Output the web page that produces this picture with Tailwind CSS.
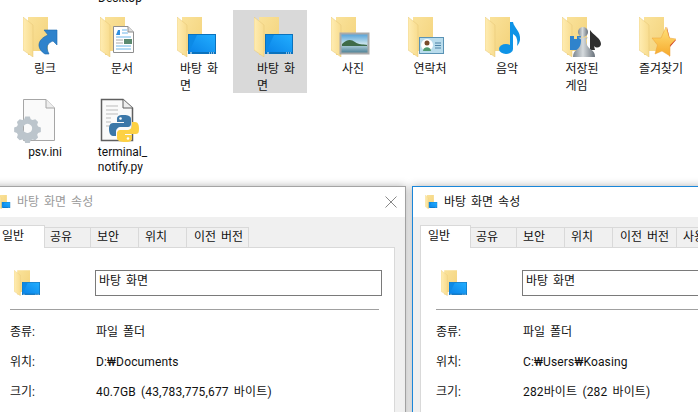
<!DOCTYPE html>
<html lang="ko">
<head>
<meta charset="UTF-8">
<title>바탕 화면 속성</title>
<script src="https://cdn.jsdelivr.net/npm/@tailwindcss/browser@4"></script>
</head>
<body class="bg-white overflow-hidden">
<svg class="absolute w-0 h-0">
  <defs>
    <linearGradient id="fb" x1="0" y1="0" x2="1" y2="1"><stop offset="0" stop-color="#fae29a"/><stop offset="1" stop-color="#f3d27a"/></linearGradient>
    <linearGradient id="ff" x1="0" y1="0" x2="1" y2="0"><stop offset="0" stop-color="#ffedb3"/><stop offset="1" stop-color="#f8dc8e"/></linearGradient>
    <linearGradient id="sc" x1="0" y1="1" x2="1" y2="0"><stop offset="0" stop-color="#0a84e8"/><stop offset="1" stop-color="#22aeff"/></linearGradient>
    <linearGradient id="pw" x1="0" y1="0" x2="1" y2="0"><stop offset="0" stop-color="#7d8790"/><stop offset=".45" stop-color="#d5dadd"/><stop offset="1" stop-color="#67707a"/></linearGradient>
    <linearGradient id="st" x1="0" y1="0" x2="0" y2="1"><stop offset="0" stop-color="#ffe27a"/><stop offset="1" stop-color="#f6a92c"/></linearGradient>
    <linearGradient id="sky" x1="0" y1="0" x2="0" y2="1"><stop offset="0" stop-color="#4d9ed8"/><stop offset=".5" stop-color="#c4e0ea"/><stop offset="1" stop-color="#44798f"/></linearGradient>
    <symbol id="folder" viewBox="0 0 25 40">
      <path d="M5 0H25V34H10V38H5Z" fill="url(#fb)"/>
      <path d="M0 0L10 8V40L0 33Z" fill="url(#ff)"/>
      <path d="M0 0L10 8V40L0 33Z" fill="none" stroke="#e6c777" stroke-width=".5"/>
    </symbol>
    <symbol id="screen" viewBox="0 0 28 20">
      <rect width="28" height="20" fill="#0b72bd"/>
      <rect x="1" y="1" width="26" height="17" fill="url(#sc)"/>
      <path d="M1 18L9 1H1Z" fill="#0c8ae6"/>
      <path d="M2 19h2M21 19h1M23 19h1M25 19h1" stroke="#fff" stroke-width="1"/>
    </symbol>
  </defs>
</svg>

<div class="h-[412px] w-[698px] overflow-hidden font-['Roboto','Noto_Sans_CJK_KR',sans-serif] text-[12px] text-[#111] [word-spacing:2px]">
  <div class="h-[174px]">
    <div class="h-[3px] pl-[98px] overflow-visible leading-[15px] -translate-y-[9px]">Desktop</div>
    <div class="grid grid-cols-[repeat(9,74px)] gap-x-[3px] gap-y-[2px] pl-[2px] pt-[7px]">

      <div class="h-[83px] pt-[3px] flex flex-col items-center">
        <svg class="w-[48px] h-[46px] overflow-visible" viewBox="0 0 48 46"><use href="#folder" x="8" y="4" width="25" height="40"/>
          <path d="M30 41C22 36 21 27 33 22L29 17H42V32L38 28C33 30 30 33 34 41Z" fill="#2f83cc" stroke="#1c69ae" stroke-width=".6"/></svg>
        <div class="mt-[2px] ml-[12px] leading-[17px]">링크</div>
      </div>

      <div class="h-[83px] pt-[3px] flex flex-col items-center">
        <svg class="w-[48px] h-[46px] overflow-visible" viewBox="0 0 48 46"><use href="#folder" x="8" y="4" width="25" height="40"/>
          <path d="M21.5 13.5H36L41.5 19V39.5H21.5Z" fill="#fff" stroke="#8f8f8f"/><path d="M36 13.500V19H41.500" fill="#ddd" stroke="#8f8f8f"/>
          <path d="M24 22l2-5h2v5z" fill="#2f8fe0"/><path d="M30 17h5M30 20h6M24 24h15M24 33h15M24 36h15" stroke="#6db6e8"/>
          <rect x="32" y="26" width="8" height="5" fill="#5b8a70"/><path d="M24 27h7M24 30h7" stroke="#aaa"/></svg>
        <div class="mt-[2px] ml-[12px] leading-[17px]">문서</div>
      </div>

      <div class="h-[83px] pt-[3px] flex flex-col items-center">
        <svg class="w-[48px] h-[46px] overflow-visible" viewBox="0 0 48 46"><use href="#folder" x="8" y="4" width="25" height="40"/><use href="#screen" x="19" y="21" width="28" height="20"/></svg>
        <div class="mt-[2px] ml-[12px] leading-[17px]">바탕 화<br>면</div>
      </div>

      <div class="h-[83px] pt-[3px] flex flex-col items-center bg-[#d9d9d9]">
        <svg class="w-[48px] h-[46px] overflow-visible" viewBox="0 0 48 46"><use href="#folder" x="8" y="4" width="25" height="40"/><use href="#screen" x="19" y="21" width="28" height="20"/></svg>
        <div class="mt-[2px] ml-[12px] leading-[17px]">바탕 화<br>면</div>
      </div>

      <div class="h-[83px] pt-[3px] flex flex-col items-center">
        <svg class="w-[48px] h-[46px] overflow-visible" viewBox="0 0 48 46"><use href="#folder" x="8" y="4" width="25" height="40"/>
          <rect x="17.500" y="20.500" width="28" height="20" fill="url(#sky)" stroke="#a9a9a9" stroke-width="2"/>
          <path d="M19 31c5-5 9-5 13-2s7 2 12 3v1H19Z" fill="#3f6b48"/></svg>
        <div class="mt-[2px] ml-[12px] leading-[17px]">사진</div>
      </div>

      <div class="h-[83px] pt-[3px] flex flex-col items-center">
        <svg class="w-[48px] h-[46px] overflow-visible" viewBox="0 0 48 46"><use href="#folder" x="8" y="4" width="25" height="40"/>
          <rect x="19.500" y="24.500" width="24" height="16" fill="#b9dcec" stroke="#5a93b5"/>
          <circle cx="27" cy="32" r="6" fill="#fff"/><circle cx="27" cy="30" r="2.500" fill="#7a4c2c"/><path d="M23 38c0-5 8-5 8 0Z" fill="#4f9a70"/>
          <path d="M35 30h6M35 32.500h6M35 35h6" stroke="#4f84a6"/></svg>
        <div class="mt-[2px] ml-[12px] leading-[17px]">연락처</div>
      </div>

      <div class="h-[83px] pt-[3px] flex flex-col items-center">
        <svg class="w-[48px] h-[46px] overflow-visible" viewBox="0 0 48 46"><use href="#folder" x="8" y="4" width="25" height="40"/>
          <ellipse cx="29" cy="36" rx="7" ry="5" fill="#0f93e6"/><path d="M33 9h3c1 6 8 9 7 18-.5 3-2 5-3 6 1-5 0-10-4-12V36h-3Z" fill="#0f93e6"/></svg>
        <div class="mt-[2px] ml-[12px] leading-[17px]">음악</div>
      </div>

      <div class="h-[83px] pt-[3px] flex flex-col items-center">
        <svg class="w-[48px] h-[46px] overflow-visible" viewBox="0 0 48 46"><use href="#folder" x="8" y="4" width="25" height="40"/>
          <path d="M16 23h4v3h3v-3h4v14H16Z" fill="#2f83cc"/>
          <path d="M36 17c3 5 11 8 11 14 0 3-4 5-7 2l1 4h-5Z" fill="#2e2e2e"/>
          <circle cx="29" cy="19" r="5" fill="url(#pw)"/><path d="M24 24.500h10l-2 2c0 5 2 8 5 10 3 2 4 4 4 7.500H19c0-3.500 1-5.500 4-7.500 3-2 4-5 4-10Z" fill="url(#pw)"/></svg>
        <div class="mt-[2px] ml-[8px] leading-[17px]">저장된<br>게임</div>
      </div>

      <div class="h-[83px] pt-[3px] flex flex-col items-center">
        <svg class="w-[48px] h-[46px] overflow-visible" viewBox="0 0 48 46"><use href="#folder" x="8" y="4" width="25" height="40"/>
          <path d="M36 14L39 27 45 27 39 34 39 44 37 39Z" fill="#d1492a"/>
          <path d="M35 14L38.500 25 45 26 39 32 39 43 31 38 24 41 26.500 32 21 25 30 25Z" fill="url(#st)" stroke="#eda23a" stroke-width=".5"/></svg>
        <div class="mt-[2px] ml-[12px] leading-[17px] whitespace-nowrap">즐겨찾기</div>
      </div>

      <div class="h-[77px] pt-[3px] flex flex-col items-center">
        <svg class="w-[48px] h-[46px] overflow-visible" viewBox="0 0 48 46">
          <path d="M8.500 1.500H31L39.500 10V42.500H8.500Z" fill="#fafafa" stroke="#a6a6a6"/><path d="M31 1.500V10H39.500" fill="#eee" stroke="#a6a6a6"/>
          <path fill-rule="evenodd" d="M10 20h5l1 3 2 1 3-1 3 3-1 3 1 2 3 1v5l-3 1-1 2 1 3-3 3-3-1-2 1-1 3h-5l-1-3-2-1-3 1-3-3 1-3-1-2-3-1v-5l3-1 1-2-1-3 3-3 3 1 2-1ZM12.500 28a5 5 0 1 0 .01 0Z" fill="#bcc5cc" transform="translate(1 0) scale(.92)"/></svg>
        <div class="mt-[1px] ml-[12px] leading-[15px]">psv.ini</div>
      </div>

      <div class="h-[77px] pt-[3px] flex flex-col items-center">
        <svg class="w-[48px] h-[46px] overflow-visible" viewBox="0 0 48 46">
          <path d="M9.500 1.500H31L40.500 10V42.500H9.500Z" fill="#fafafa" stroke="#5f5f5f" stroke-width="1.500"/><path d="M31 1.500V10H40.500" fill="#eee" stroke="#5f5f5f"/>
          <path d="M14 8h12M14 12h12M14 16h12M14 20h5M14 24h5M14 28h4" stroke="#bbb"/>
          <path d="M32 17c-7 0-7 2-7 5v2h7v1H21c-3 0-4 3-4 6s1 7 4 7h3v-4c0-3 2-5 5-5h7c2 0 3-2 3-3v-5c0-3-3-4-7-4Z" fill="#3b77a8"/>
          <path d="M33 44c7 0 7-2 7-5v-2h-7v-1h11c3 0 3-3 3-6s-1-6-4-6h-3v3c0 3-2 5-5 5h-7c-2 0-3 2-3 3v5c0 3 4 4 8 4Z" fill="#fdd144"/>
          <circle cx="28.500" cy="20.500" r="1.300" fill="#fff"/><circle cx="36" cy="40.500" r="1.300" fill="#fff"/></svg>
        <div class="mt-[1px] ml-[13px] leading-[15px]">terminal_<br>notify.py</div>
      </div>

    </div>
  </div>

  <div class="flex gap-[6px] -ml-[15px] mt-[12px]">

    <div class="w-[421px] h-[240px] shrink-0 border border-[#a4a4a4] border-b-0 bg-[#f0f0f0] shadow-[0_0_8px_rgba(0,0,0,0.3)]">
      <div class="h-[30px] bg-white flex items-center pl-[11px] text-[#999]">
        <svg class="w-[16px] h-[16px] shrink-0" viewBox="0 0 16 16"><use href="#folder" x="1" y="1" width="9" height="14"/><use href="#screen" x="4" y="8" width="10" height="6"/></svg>
        <span class="ml-[4px] leading-[18px]">바탕 화면 속성</span>
        <svg class="ml-auto mr-[8px] w-[12px] h-[12px]" viewBox="0 0 12 12"><path d="M.5.500l11 11M11.500.500l-11 11" stroke="#888"/></svg>
      </div>
      <div class="pl-[8px] pr-[10px] pt-[8px]">
        <div class="flex items-end h-[23px] relative z-10 -mb-px">
          <div class="w-[51px] h-[23px] bg-white border border-[#d9d9d9] border-b-0 pl-[7px] pt-[2px] leading-[17px]">일반</div>
          <div class="w-[46px] h-[21px] bg-[#f0f0f0] border border-l-0 border-[#d9d9d9] pl-[5px] leading-[19px]">공유</div>
          <div class="w-[48px] h-[21px] bg-[#f0f0f0] border border-l-0 border-[#d9d9d9] pl-[6px] leading-[19px]">보안</div>
          <div class="w-[48px] h-[21px] bg-[#f0f0f0] border border-l-0 border-[#d9d9d9] pl-[6px] leading-[19px]">위치</div>
          <div class="w-[62px] h-[21px] bg-[#f0f0f0] border border-l-0 border-[#d9d9d9] pl-[7px] leading-[19px] whitespace-nowrap">이전 버전</div>
        </div>
        <div class="h-[170px] bg-white border border-[#d9d9d9] border-b-0 pl-[15px] pr-[15px] pt-[22px]">
          <div class="flex items-start h-[40px] border-b border-[#a0a0a0]">
            <svg class="w-[26px] h-[32px] shrink-0 -mt-[3px] ml-[4px]" viewBox="0 0 26 32"><use href="#folder" x="0" y="0" width="16" height="32"/><use href="#screen" x="8" y="14" width="18" height="15"/></svg>
            <div class="ml-[55px] -mr-[3px] flex-1 h-[26px] border border-[#7a7a7a] pl-[3px] leading-[21px]">바탕 화면</div>
          </div>
          <div class="grid grid-cols-[86px_1fr] auto-rows-[30px] items-center pt-[7px]">
            <div>종류:</div><div>파일 폴더</div>
            <div>위치:</div><div class="tracking-[0.15px]">D:₩Documents</div>
            <div>크기:</div><div class="tracking-[0.15px]">40.7GB (43,783,775,677 바이트)</div>
          </div>
        </div>
      </div>
    </div>

    <div class="w-[421px] h-[240px] shrink-0 border border-[#1a86d9] border-b-0 bg-[#f0f0f0] shadow-[0_0_8px_rgba(0,0,0,0.3)]">
      <div class="h-[30px] bg-white flex items-center pl-[11px]">
        <svg class="w-[16px] h-[16px] shrink-0" viewBox="0 0 16 16"><use href="#folder" x="1" y="1" width="9" height="14"/><use href="#screen" x="4" y="8" width="10" height="6"/></svg>
        <span class="ml-[4px] leading-[18px]">바탕 화면 속성</span>
      </div>
      <div class="pl-[7px] pr-[10px] pt-[8px]">
        <div class="flex items-end h-[23px] relative z-10 -mb-px">
          <div class="w-[51px] h-[23px] bg-white border border-[#d9d9d9] border-b-0 pl-[7px] pt-[2px] leading-[17px]">일반</div>
          <div class="w-[46px] h-[21px] bg-[#f0f0f0] border border-l-0 border-[#d9d9d9] pl-[5px] leading-[19px]">공유</div>
          <div class="w-[48px] h-[21px] bg-[#f0f0f0] border border-l-0 border-[#d9d9d9] pl-[6px] leading-[19px]">보안</div>
          <div class="w-[48px] h-[21px] bg-[#f0f0f0] border border-l-0 border-[#d9d9d9] pl-[6px] leading-[19px]">위치</div>
          <div class="w-[64px] h-[21px] bg-[#f0f0f0] border border-l-0 border-[#d9d9d9] pl-[7px] leading-[19px] whitespace-nowrap">이전 버전</div>
          <div class="w-[46px] h-[21px] bg-[#f0f0f0] border border-l-0 border-[#d9d9d9] pl-[6px] leading-[19px] whitespace-nowrap">사용자 지정</div>
        </div>
        <div class="h-[170px] bg-white border border-[#d9d9d9] border-b-0 pl-[15px] pr-[15px] pt-[22px]">
          <div class="flex items-start h-[40px] border-b border-[#a0a0a0]">
            <svg class="w-[26px] h-[32px] shrink-0 -mt-[3px] ml-[5px]" viewBox="0 0 26 32"><use href="#folder" x="0" y="0" width="16" height="32"/><use href="#screen" x="8" y="14" width="18" height="15"/></svg>
            <div class="ml-[55px] flex-1 h-[26px] border border-[#7a7a7a] pl-[3px] leading-[21px]">바탕 화면</div>
          </div>
          <div class="grid grid-cols-[87px_1fr] auto-rows-[30px] items-center pt-[7px]">
            <div>종류:</div><div>파일 폴더</div>
            <div>위치:</div><div class="tracking-[0.15px]">C:₩Users₩Koasing</div>
            <div>크기:</div><div class="tracking-[0.15px]">282바이트 (282 바이트)</div>
          </div>
        </div>
      </div>
    </div>

  </div>
</div>
</body>
</html>
